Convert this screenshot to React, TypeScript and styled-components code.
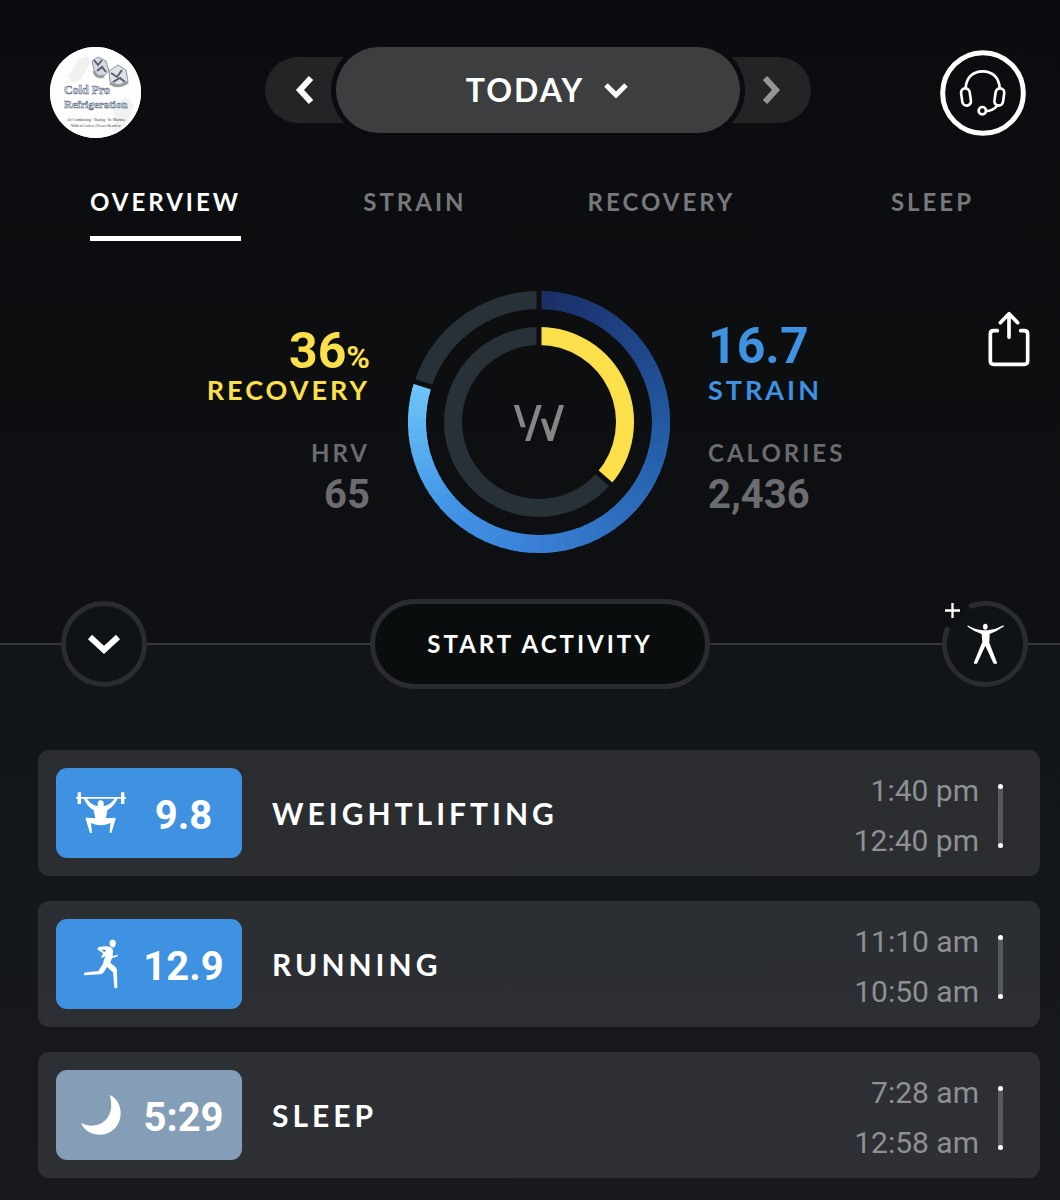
import React from "react";
import styled, { createGlobalStyle } from "styled-components";

const Global = createGlobalStyle`
  * { box-sizing: border-box; }
  html { background: #17191e; }
  body { margin: 0; color: #fff; font-family: Lato, "Open Sans", sans-serif; }
  button { font: inherit; color: inherit; background: none; border: 0; padding: 0; cursor: pointer; }
  svg { display: block; }
`;

const caps = "Lato, 'Open Sans', sans-serif";
const digits = "Roboto, 'Noto Sans', sans-serif";

const Page = styled.div`
  min-height: 100vh;
  background: linear-gradient(#111518 55%, #17191e);
`;

const Top = styled.div`
  background: linear-gradient(#0b0c0f, #0c0e10 60%, #0f1013);
`;

const Header = styled.header`
  display: grid;
  grid-template-columns: 1fr auto 1fr;
  align-items: center;
  padding: 47px 34px 0 50px;
`;

const Avatar = styled.button`
  width: 91px;
  height: 91px;
  border-radius: 50%;
  overflow: hidden;
  background: #fff;
`;

const DateNav = styled.nav`
  display: flex;
  align-items: center;
  height: 86px;
  align-self: start;
`;

const Step = styled.button<{ $side: "left" | "right" }>`
  display: flex;
  align-items: center;
  justify-content: ${(p) => (p.$side === "left" ? "flex-start" : "flex-end")};
  width: 114px;
  height: 66px;
  padding: 0 30px;
  border-radius: 33px;
  background: #232426;
  color: ${(p) => (p.$side === "left" ? "#fff" : "#949597")};
  margin-left: ${(p) => (p.$side === "left" ? "0" : "-43px")};
  margin-right: ${(p) => (p.$side === "left" ? "-43px" : "0")};
`;

const DayButton = styled.button`
  position: relative;
  display: flex;
  align-items: center;
  justify-content: center;
  gap: 20px;
  width: 404px;
  height: 86px;
  padding-left: 18px;
  border-radius: 43px;
  background: #3d3e40;
  box-shadow: 0 0 0 5px #0b0c0f;
  font: 700 32px/40px ${caps};
  letter-spacing: 2px;
`;

const Support = styled.button`
  justify-self: end;
  width: 86px;
  height: 86px;
`;

const Tabs = styled.nav`
  display: grid;
  grid-template-columns: 273fr 224fr 303fr auto;
  justify-items: start;
  padding: 48px 86px 0 90px;
`;

const Tab = styled.button<{ $active?: boolean }>`
  padding-bottom: 18px;
  border-bottom: 5px solid ${(p) => (p.$active ? "#fff" : "transparent")};
  color: ${(p) => (p.$active ? "#fff" : "#77787b")};
  font: 700 24px/32px ${caps};
  letter-spacing: 3px;
`;

const Summary = styled.section`
  display: grid;
  grid-template-columns: 1fr 262px 1fr;
  column-gap: 38px;
  align-items: center;
  padding: 50px 30px 46px 48px;
`;

const Stats = styled.dl<{ $align: "left" | "right" }>`
  display: flex;
  flex-direction: column;
  gap: 34px;
  margin: 0;
  text-align: ${(p) => p.$align};
`;

const Stat = styled.div<{ $valueFirst?: boolean }>`
  display: flex;
  flex-direction: ${(p) => (p.$valueFirst ? "column-reverse" : "column")};
`;

const MainLabel = styled.dt<{ $color: string }>`
  color: ${(p) => p.$color};
  font: 700 27px/30px ${caps};
  letter-spacing: 3px;
`;

const MainValue = styled.dd<{ $color: string; $raised?: boolean }>`
  margin: ${(p) => (p.$raised ? "-5px 0 5px" : "0")};
  color: ${(p) => p.$color};
  font: 700 50px/48px ${digits};
`;

const Unit = styled.span`
  font-size: 32px;
  line-height: 1;
`;

const MinorLabel = styled.dt`
  color: #6b6c6f;
  font: 700 24px/28px ${caps};
  letter-spacing: 3px;
`;

const MinorValue = styled.dd`
  margin: 6px 0 0;
  color: #6b6c6f;
  font: 700 40px/44px ${digits};
`;

const RightSide = styled.div`
  display: flex;
  justify-content: space-between;
  align-items: flex-start;
`;

const Share = styled.button`
  margin-top: -16px;
`;

const Actions = styled.div`
  display: grid;
  grid-template-columns: 61px auto 224fr auto 233fr auto 32px;
  align-items: center;
  background: linear-gradient(#0f1013 50%, #111518 50%);
`;

const Rule = styled.span`
  height: 2px;
  background: #36383c;
`;

const RoundButton = styled.button`
  display: grid;
  place-items: center;
  width: 86px;
  height: 86px;
  border: 5px solid #2a2c2f;
  border-radius: 50%;
  background: #0f1316;
`;

const AddButton = styled.button`
  width: 86px;
  height: 86px;
`;

const StartButton = styled.button`
  width: 340px;
  height: 90px;
  border: 5px solid #2a2c2f;
  border-radius: 45px;
  background: #0a0d0e;
  font: 700 24px/32px ${caps};
  letter-spacing: 3px;
`;

const List = styled.ul`
  display: flex;
  flex-direction: column;
  gap: 25px;
  margin: 0;
  padding: 61px 20px 22px 38px;
  list-style: none;
`;

const Card = styled.li`
  display: flex;
  align-items: center;
  padding: 18px;
  padding-right: 37px;
  border-radius: 11px;
  background: rgba(255, 255, 255, 0.1);
`;

const Badge = styled.div<{ $color: string }>`
  display: grid;
  grid-template-columns: 56px 1fr;
  place-items: center;
  width: 186px;
  height: 90px;
  padding: 0 4px 0 17px;
  border-radius: 11px;
  background: ${(p) => p.$color};
`;

const Score = styled.span`
  padding-top: 5px;
  font: 700 40px/48px ${digits};
`;

const Title = styled.h2`
  flex: 1;
  margin: 0 0 0 30px;
  font: 700 30px/40px ${caps};
  letter-spacing: 4px;
`;

const Period = styled.div`
  display: flex;
  align-items: center;
  gap: 19px;
  height: 90px;
  padding-top: 5px;
`;

const Times = styled.div`
  display: flex;
  flex-direction: column;
  gap: 10px;
  color: #8e9093;
  text-align: right;
  font: 400 30px/40px ${digits};
`;

const Span = styled.span`
  display: flex;
  flex-direction: column;
  justify-content: space-between;
  width: 5px;
  height: 64px;
  border-radius: 3px;
  background: #58595c;
  &::before, &::after {
    content: "";
    height: 5px;
    border-radius: 50%;
    background: #fff;
  }
`;

function Chevron({ points, w, h, stroke }: { points: string; w: number; h: number; stroke: number }) {
  return (
    <svg width={w} height={h} viewBox={`0 0 ${w} ${h}`} fill="none" stroke="currentColor" strokeWidth={stroke} aria-hidden>
      <polyline points={points} />
    </svg>
  );
}

function AvatarArt() {
  return (
    <svg width="91" height="91" viewBox="0 0 91 91" aria-hidden>
      <rect width="91" height="91" fill="#fdfdfd" />
      <path d="M18 30 28 13l9-4 3 7-9 16-8 4Z" fill="#f0f0f1" />
      <path d="M62 60 76 50l8 8-8 20-14 8 4-14Z" fill="#f1f2f4" />
      <g stroke="#8d96a4" strokeWidth="1">
        <path d="m42 14 6-4 8 4 3 10-6 6-8-3Z" fill="#d6dae0" />
        <path d="m59 24 9-6 8 5 2 11-8 5-10-4Z" fill="#dfe2e7" />
      </g>
      <g fill="none" stroke="#56606f" strokeWidth="2">
        <path d="m44 13 4 5 4-5m-5 11 5-4 4 5M61 26l6 4 5-7m-9 12 7-4 5 4" />
      </g>
      <path d="M44 24q2 8 10 5M60 36q8 6 18-1" fill="none" stroke="#9b9da2" strokeWidth="3" />
      <g fill="#dce8f2" stroke="#526173" strokeWidth=".5" fontFamily="Liberation Serif, serif" fontWeight="700" fontSize="12">
        <text x="14" y="47">Cold Pro</text>
        <text x="14" y="61" fontSize="11">Refrigeration</text>
      </g>
      <g fill="#333" fontFamily="Liberation Serif, serif" fontSize="3.500">
        <text x="17" y="74">Air Conditioning · Heating · Ice Machine</text>
        <text x="21" y="80">Walk-in Coolers | Freezer Reach-in</text>
      </g>
    </svg>
  );
}

function HeadsetIcon() {
  return (
    <svg width="86" height="86" viewBox="60 43 258 258" fill="none" stroke="#fff" strokeLinecap="round" aria-hidden>
      <circle cx="189" cy="172" r="121" strokeWidth="15" />
      <g strokeWidth="8">
        <path d="M137 157C139 124 160 107 188 107s49 17 51 50" />
        <rect x="125" y="158" width="26" height="52" rx="13" transform="rotate(-8 138 184)" />
        <rect x="225" y="158" width="26" height="52" rx="13" transform="rotate(8 238 184)" />
        <circle cx="187" cy="225" r="11" />
        <path d="M199 226C215 226 224 219 233 209" />
      </g>
    </svg>
  );
}

function ShareIcon() {
  return (
    <svg width="42" height="56" viewBox="896 34 126 168" fill="none" stroke="#fff" strokeWidth="11" strokeLinecap="round" strokeLinejoin="round" aria-hidden>
      <path d="M924 93h-11q-10 0-10 10v81q0 10 10 10h92q10 0 10-10v-81q0-10-10-10h-11" />
      <path d="M959 113V43M933 69l26-27 26 27" />
    </svg>
  );
}

const STOPS: [number, number[]][] = [
  [0, [27, 46, 102]],
  [45, [31, 67, 134]],
  [90, [35, 90, 163]],
  [180, [57, 128, 214]],
  [225, [66, 148, 230]],
  [288, [112, 200, 250]],
];

function strainColor(deg: number) {
  let i = 1;
  while (i < STOPS.length - 1 && deg > STOPS[i][0]) i++;
  const [a, from] = STOPS[i - 1];
  const [b, to] = STOPS[i];
  const t = (deg - a) / (b - a);
  return `rgb(${from.map((v, k) => Math.round(v + (to[k] - v) * t)).join(",")})`;
}

function arc(r: number, from: number, to: number) {
  const at = (d: number) => {
    const a = ((d - 90) * Math.PI) / 180;
    return `${131 + r * Math.cos(a)} ${131 + r * Math.sin(a)}`;
  };
  return `M${at(from)}A${r} ${r} 0 ${to - from > 180 ? 1 : 0} 1 ${at(to)}`;
}

function Rings({ strain, recovery }: { strain: number; recovery: number }) {
  const steps = 72;
  return (
    <svg width="262" height="262" viewBox="0 0 262 262" fill="none" role="img" aria-label="Strain and recovery">
      <g strokeWidth="18">
        <circle cx="131" cy="131" r="122" stroke="#283138" />
        <circle cx="131" cy="131" r="86" stroke="#283138" />
        {Array.from({ length: steps }, (_, i) => {
          const from = (strain * i) / steps;
          const to = Math.min(strain, (strain * (i + 1)) / steps + 1);
          return <path key={i} d={arc(122, from, to)} stroke={strainColor(from)} />;
        })}
        <path d={arc(86, 0, recovery)} stroke="#fbdf4b" />
      </g>
      <g stroke="#0c0e10" strokeWidth="5">
        <path d="M131 0V60" />
        <path d="M131 -2V24" transform={`rotate(${strain} 131 131)`} />
        <path d="M131 34V56" transform={`rotate(${recovery} 131 131)`} />
      </g>
      <g fill="#858688" transform="translate(-13.2 -16) scale(.3333)">
        <path d="M357 390h15l21 67h-15Z" />
        <path d="M426 390h15l-35 108h-15Z" />
        <path d="M438 431h15l14 40 26-81h15l-34 108h-14Z" />
      </g>
    </svg>
  );
}

function AddPersonIcon() {
  return (
    <svg width="86" height="86" viewBox="126 48 258 258" fill="none" aria-hidden>
      <circle cx="255" cy="177" r="120" fill="#0f1316" />
      <path d="M126 48h70v50l-50 22h-20Z" fill="#0f1013" />
      <path d="M207.600 65A121.500 121.500 0 1 1 144.400 126.700" stroke="#2a2c2f" strokeWidth="15" />
      <path d="M157.500 54v45M135 76.500h45" stroke="#fff" strokeWidth="7" />
      <g fill="#fff">
        <ellipse cx="256" cy="125" rx="7" ry="9" />
        <path d="M203 121q22 13 46 15h14q24-2 48-15l1 3q-20 15-43 23l-1 26 23 60v3h-10l-25-54-25 54h-9v-4l25-61-2-24q-22-7-42-22Z" />
      </g>
    </svg>
  );
}

function LifterIcon() {
  return (
    <svg width="52" height="44" viewBox="135 152 156 132" fill="#fff" aria-hidden>
      <path d="M138 170h5v-14h10v14h120v-14h10v14h5v5h-5v16h-10v-16H153v16h-10v-16h-5Z" />
      <path d="M160 170h8q10 22 35 28v-8q0-10 9-10t9 10v8q25-6 36-28h8q-10 26-33 40l-4 24 26-2q3 0 3 4l-13 42h-5l2-30q-15 7-29 7t-29-7l3 30h-6l-13-42q0-5 4-4l25 2-5-24q-23-14-31-40Z" />
    </svg>
  );
}

function RunnerIcon() {
  return (
    <svg width="36" height="52" viewBox="156 113 108 156" fill="#fff" aria-hidden>
      <path d="M236 123q4-6 11-5 8 2 8 10-1 10-7 14-8 0-12-8Z" />
      <path fillRule="evenodd" d="M208 139q16-3 29 0 9 4 9 12l-1 16 15-4v5q-8 4-17 5l-5 15q16 10 20 20l1 55q-4 2-9-1l-4-46-18-16-11 17q-3 4-9 5l-49 3v-5q1-4 8-4l35-4 14-21q1-12 8-24l-11 6-2-3 5-11-17-12q0-6 8-8Zm2 9 11 8 4-8Z" />
    </svg>
  );
}

function MoonIcon() {
  return (
    <svg width="40" height="40" viewBox="151 586 120 120" fill="#fff" aria-hidden>
      <path d="M237 586C258 595 270 616 270 640C270 677 243 705 209 705C182 705 160 692 151 669C168 679 196 683 217 668C242 650 247 616 237 586Z" />
    </svg>
  );
}

const activities = [
  { title: "WEIGHTLIFTING", score: "9.8", color: "#3f91e1", icon: <LifterIcon />, end: "1:40 pm", start: "12:40 pm" },
  { title: "RUNNING", score: "12.9", color: "#3f91e1", icon: <RunnerIcon />, end: "11:10 am", start: "10:50 am" },
  { title: "SLEEP", score: "5:29", color: "#839eb6", icon: <MoonIcon />, end: "7:28 am", start: "12:58 am" },
];

export default function App() {
  return (
    <Page>
      <Global />
      <Top>
        <Header>
          <Avatar aria-label="Profile"><AvatarArt /></Avatar>
          <DateNav aria-label="Day">
            <Step $side="left" aria-label="Previous day">
              <Chevron w={18} h={30} points="16,3 5,15 16,27" stroke={6} />
            </Step>
            <DayButton>
              TODAY
              <Chevron w={24} h={16} points="2,3 12,13 22,3" stroke={5} />
            </DayButton>
            <Step $side="right" aria-label="Next day">
              <Chevron w={18} h={30} points="2,3 13,15 2,27" stroke={6} />
            </Step>
          </DateNav>
          <Support aria-label="Support"><HeadsetIcon /></Support>
        </Header>
        <Tabs>
          <Tab $active>OVERVIEW</Tab>
          <Tab>STRAIN</Tab>
          <Tab>RECOVERY</Tab>
          <Tab>SLEEP</Tab>
        </Tabs>
        <Summary>
          <Stats $align="right">
            <Stat $valueFirst>
              <MainLabel $color="#fbdf4b">RECOVERY</MainLabel>
              <MainValue $color="#fbdf4b">36<Unit>%</Unit></MainValue>
            </Stat>
            <Stat>
              <MinorLabel>HRV</MinorLabel>
              <MinorValue>65</MinorValue>
            </Stat>
          </Stats>
          <Rings strain={288} recovery={131} />
          <RightSide>
            <Stats $align="left">
              <Stat $valueFirst>
                <MainLabel $color="#3f91e1">STRAIN</MainLabel>
                <MainValue $color="#3f91e1" $raised>16.7</MainValue>
              </Stat>
              <Stat>
                <MinorLabel>CALORIES</MinorLabel>
                <MinorValue>2,436</MinorValue>
              </Stat>
            </Stats>
            <Share aria-label="Share"><ShareIcon /></Share>
          </RightSide>
        </Summary>
      </Top>
      <Actions>
        <Rule />
        <RoundButton aria-label="Collapse">
          <Chevron w={34} h={22} points="3,4 17,17 31,4" stroke={6} />
        </RoundButton>
        <Rule />
        <StartButton>START ACTIVITY</StartButton>
        <Rule />
        <AddButton aria-label="Add activity"><AddPersonIcon /></AddButton>
        <Rule />
      </Actions>
      <List>
        {activities.map((a) => (
          <Card key={a.title}>
            <Badge $color={a.color}>
              {a.icon}
              <Score>{a.score}</Score>
            </Badge>
            <Title>{a.title}</Title>
            <Period>
              <Times>
                <time>{a.end}</time>
                <time>{a.start}</time>
              </Times>
              <Span />
            </Period>
          </Card>
        ))}
      </List>
    </Page>
  );
}
